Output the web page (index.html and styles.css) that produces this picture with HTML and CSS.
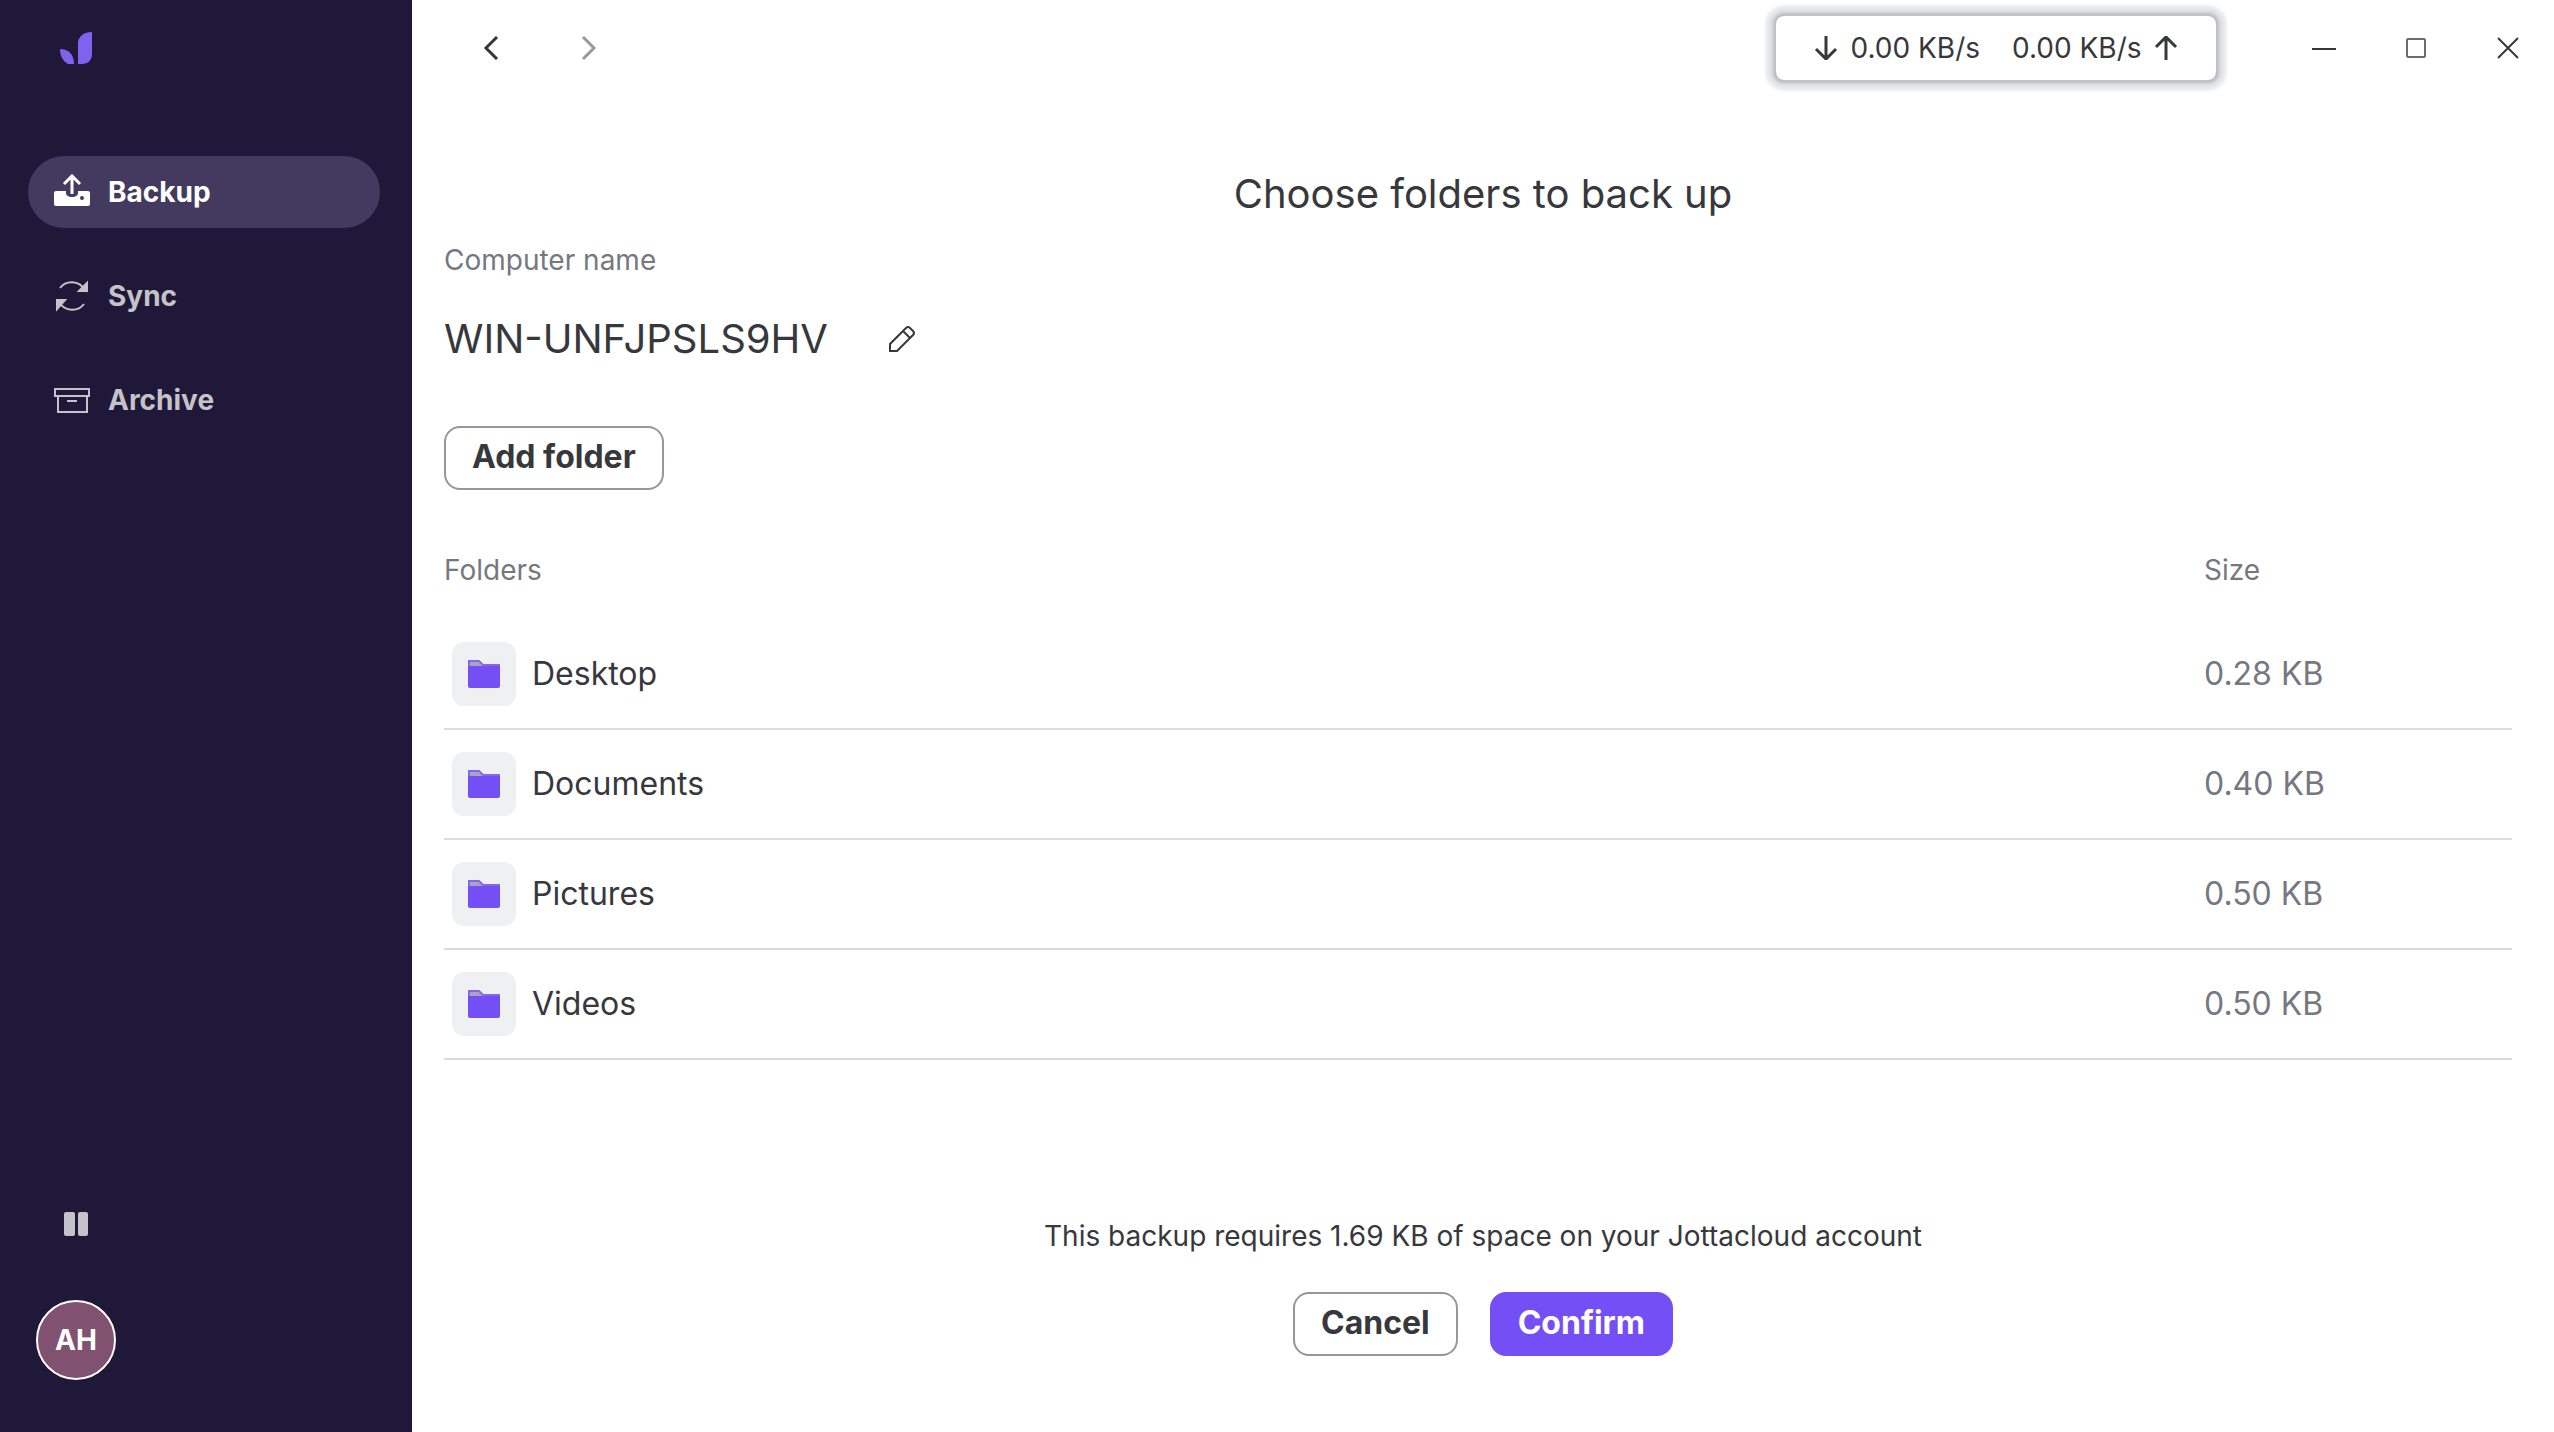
FILE: index.html
```html
<!DOCTYPE html>
<html lang="en">
<head>
    <meta charset="UTF-8">
    <title>Jottacloud</title>
    <link rel="stylesheet" href="styles.css">
</head>
<body>
    <aside class="sidebar">
        <svg class="logo" viewBox="0 0 32 32" width="32" height="32">
            <path d="M0 17c8 0 14 5 14 15H8C3 29 0 24 0 17z"/>
            <path d="M18 32V10C19 4 24 0 32 0v22c0 6-4 10-10 10z"/>
        </svg>
        <nav class="menu">
            <a href="#" class="menu-item active">
                <svg viewBox="0 0 36 36" width="36" height="36" fill="none">
                    <path d="M2 17h10v2c0 2 2 4 6 4s6-2 6-4v-2h10q2 0 2 2v11q0 2-2 2H2q-2 0-2-2V19q0-2 2-2z" fill="#fff"/>
                    <circle cx="28" cy="24" r="2" fill="#443a60"/>
                    <path d="M18 20V2M10 10l8-8 8 8" stroke="#fff" stroke-width="3"/>
                </svg>
                Backup
            </a>
            <a href="#" class="menu-item">
                <svg viewBox="0 0 36 36" width="36" height="36" fill="none" stroke="currentColor" stroke-width="2">
                    <path d="M6 10c6-8 19-8 25 2M30 26c-6 8-19 8-25-2"/>
                    <path d="M33 5v8h-8zM3 31v-9h8z" fill="currentColor"/>
                </svg>
                Sync
            </a>
            <a href="#" class="menu-item">
                <svg viewBox="0 0 36 36" width="36" height="36" fill="none" stroke="currentColor" stroke-width="2">
                    <path d="M1 7h34v7H1zM4 14v16h29V14M13 19h10"/>
                </svg>
                Archive
            </a>
        </nav>
        <button class="pause" aria-label="Pause">
            <svg viewBox="0 0 24 24" width="24" height="24" fill="currentColor">
                <rect x="0" y="0" width="11" height="24" rx="2"/>
                <rect x="14" y="0" width="10" height="24" rx="2"/>
            </svg>
        </button>
        <button class="avatar">AH</button>
    </aside>

    <main class="main">
        <header class="topbar">
            <div class="history">
                <button class="icon-button" aria-label="Back">
                    <svg viewBox="0 0 24 24" width="24" height="24"><path d="M17 1L6 12l11 11" stroke-width="3"/></svg>
                </button>
                <button class="icon-button" aria-label="Forward" disabled>
                    <svg viewBox="0 0 24 24" width="24" height="24"><path d="M7 1l11 11L7 23" stroke-width="3"/></svg>
                </button>
            </div>
            <div class="speed">
                <span class="rate">
                    <svg viewBox="0 0 24 24" width="24" height="24"><path d="M12 0v23M2 13l10 10 10-10" stroke-width="3"/></svg>
                    0.00 KB/s
                </span>
                <span class="rate">
                    0.00 KB/s
                    <svg viewBox="0 0 24 24" width="24" height="24"><path d="M12 24V1M2 11L12 1l10 10" stroke-width="3"/></svg>
                </span>
            </div>
            <div class="window-buttons">
                <button class="icon-button" aria-label="Minimize">
                    <svg viewBox="0 0 24 24" width="24" height="24"><path d="M0 13h24" stroke-width="2"/></svg>
                </button>
                <button class="icon-button maximize" aria-label="Maximize">
                    <svg viewBox="0 0 24 24" width="24" height="24"><rect x="3" y="3" width="18" height="18" rx="1" stroke-width="2"/></svg>
                </button>
                <button class="icon-button" aria-label="Close">
                    <svg viewBox="0 0 24 24" width="24" height="24"><path d="M2 2l20 20M22 2L2 22" stroke-width="2"/></svg>
                </button>
            </div>
        </header>

        <h1>Choose folders to back up</h1>

        <section class="content">
            <p class="label">Computer name</p>
            <div class="computer">
                <span class="computer-name">WIN-UNFJPSLS9HV</span>
                <button class="icon-button" aria-label="Edit computer name">
                    <svg viewBox="0 0 28 28" width="28" height="28"><path d="M2 26v-7L18 3q2-2 4 0l3 3q2 2 0 4L9 26zM15 6l7 7" stroke-width="2"/></svg>
                </button>
            </div>
            <button class="button">Add folder</button>

            <table class="folders">
                <thead>
                    <tr><th>Folders</th><th class="size">Size</th></tr>
                </thead>
                <tbody>
                    <tr>
                        <td><div class="folder"><span class="tile"><svg viewBox="0 0 32 28" width="32" height="28"><path class="tab" d="M1 6V1h10l4 4h16v2"/><path d="M0 6h32v20q0 2-2 2H2q-2 0-2-2z"/></svg></span>Desktop</div></td>
                        <td class="size">0.28 KB</td>
                    </tr>
                    <tr>
                        <td><div class="folder"><span class="tile"><svg viewBox="0 0 32 28" width="32" height="28"><path class="tab" d="M1 6V1h10l4 4h16v2"/><path d="M0 6h32v20q0 2-2 2H2q-2 0-2-2z"/></svg></span>Documents</div></td>
                        <td class="size">0.40 KB</td>
                    </tr>
                    <tr>
                        <td><div class="folder"><span class="tile"><svg viewBox="0 0 32 28" width="32" height="28"><path class="tab" d="M1 6V1h10l4 4h16v2"/><path d="M0 6h32v20q0 2-2 2H2q-2 0-2-2z"/></svg></span>Pictures</div></td>
                        <td class="size">0.50 KB</td>
                    </tr>
                    <tr>
                        <td><div class="folder"><span class="tile"><svg viewBox="0 0 32 28" width="32" height="28"><path class="tab" d="M1 6V1h10l4 4h16v2"/><path d="M0 6h32v20q0 2-2 2H2q-2 0-2-2z"/></svg></span>Videos</div></td>
                        <td class="size">0.50 KB</td>
                    </tr>
                </tbody>
            </table>
        </section>

        <footer class="footer">
            <p>This backup requires 1.69 KB of space on your Jottacloud account</p>
            <div class="actions">
                <button class="button">Cancel</button>
                <button class="button primary">Confirm</button>
            </div>
        </footer>
    </main>
</body>
</html>
```
FILE: styles.css
```css
* {
    box-sizing: border-box;
}
body {
    margin: 0;
    display: flex;
    min-height: 100vh;
    font-family: Inter, "Liberation Sans", sans-serif;
    font-size: 28px;
    line-height: 36px;
    color: #37383c;
    background-color: #fff;
}
button {
    font-family: inherit;
    color: inherit;
    padding: 0;
    border: none;
    background: none;
    cursor: pointer;
}
svg {
    display: block;
    flex: none;
}
p {
    margin: 0;
}

/* Sidebar */
.sidebar {
    width: 412px;
    flex: none;
    display: flex;
    flex-direction: column;
    align-items: flex-start;
    padding: 32px 32px 52px 28px;
    background-color: #201839;
    color: #c4c3c9;
}
.logo {
    margin-left: 32px;
    fill: #8062ee;
}
.menu {
    align-self: stretch;
    display: flex;
    flex-direction: column;
    gap: 32px;
    margin-top: 92px;
}
.menu-item {
    display: flex;
    align-items: center;
    gap: 18px;
    height: 72px;
    padding: 0 26px;
    border-radius: 36px;
    font-weight: 700;
    color: inherit;
    text-decoration: none;
}
.menu-item.active {
    background-color: #443a60;
    color: #fff;
}
.pause {
    margin: auto 0 64px 36px;
}
.avatar {
    width: 80px;
    height: 80px;
    margin-left: 8px;
    border: 2px solid #fff;
    border-radius: 50%;
    background-color: #80526f;
    color: #fff;
    font-size: 28px;
    font-weight: 700;
}

/* Main */
.main {
    flex: 1;
    display: flex;
    flex-direction: column;
}
.topbar {
    display: flex;
    align-items: center;
    height: 96px;
    padding: 0 34px 0 68px;
}
.icon-button svg {
    fill: none;
    stroke: currentColor;
}
.icon-button:disabled {
    color: #999aa0;
}
.icon-button.maximize {
    color: #6b6c72;
}
.history {
    display: flex;
    gap: 72px;
}
.speed {
    display: flex;
    align-items: center;
    justify-content: center;
    gap: 32px;
    width: 440px;
    height: 64px;
    margin-left: auto;
    border-radius: 8px;
    box-shadow: 0 0 2px 3px #c0c0c4, 0 0 4px 7px #dadbdf, 0 0 2px 11px #f0f1f1;
}
.rate {
    display: flex;
    align-items: center;
    gap: 12px;
}
.rate svg {
    fill: none;
    stroke: currentColor;
}
.window-buttons {
    display: flex;
    gap: 68px;
    margin-left: 96px;
}
h1 {
    margin: 74px 0 24px;
    font-size: 40px;
    font-weight: 400;
    line-height: 48px;
    text-align: center;
}
.content {
    padding: 0 42px 0 32px;
}
.label {
    color: #75787f;
}
.computer {
    display: flex;
    align-items: center;
    gap: 60px;
    margin: 37px 0 63px;
}
.computer-name {
    font-size: 40px;
    line-height: 48px;
}
.button {
    height: 64px;
    padding: 0 26px 4px;
    border: 2px solid #96979d;
    border-radius: 16px;
    font-size: 32px;
    font-weight: 700;
}
.button.primary {
    border-color: #744ff5;
    background-color: #744ff5;
    color: #fff;
}
.folders {
    width: 100%;
    margin-top: 62px;
    border-collapse: collapse;
    text-align: left;
}
.folders th {
    padding: 0 0 31px;
    font-weight: 400;
    color: #75787f;
}
.folders td {
    height: 110px;
    padding: 0;
    border-bottom: 2px solid #dadadf;
    font-size: 32px;
}
.folders .size {
    width: 308px;
    color: #75787f;
}
.folder {
    display: flex;
    align-items: center;
    gap: 16px;
    padding-left: 8px;
}
.tile {
    display: flex;
    align-items: center;
    justify-content: center;
    width: 64px;
    height: 64px;
    border-radius: 12px;
    background-color: #eff0f1;
}
.tile svg {
    fill: #744ff5;
}
.tile .tab {
    fill: #a9a3c4;
    stroke: #8468e8;
    stroke-width: 2;
}
.footer {
    margin-top: auto;
    padding-bottom: 76px;
    text-align: center;
}
.actions {
    display: flex;
    justify-content: center;
    gap: 32px;
    margin-top: 38px;
}
```
